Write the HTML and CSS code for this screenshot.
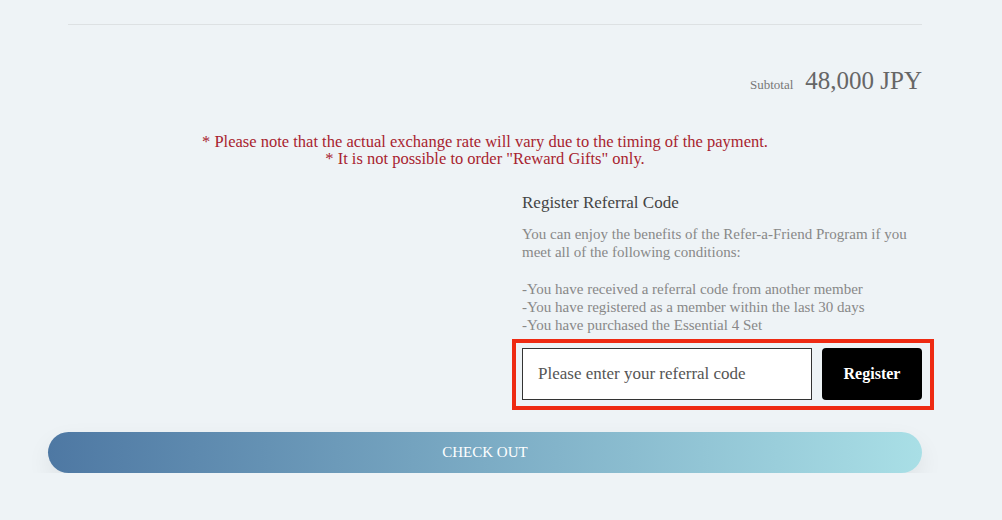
FILE: index.html
```html
<!DOCTYPE html>
<html lang="en">
<head>
    <meta charset="UTF-8">
    <meta name="viewport" content="width=device-width, initial-scale=1.0">
    <title>Cart</title>
    <link rel="stylesheet" href="styles.css">
</head>
<body>
    <div class="cart">
        <div class="divider"></div>

        <div class="subtotal">
            <span class="subtotal-label">Subtotal</span>
            <span class="subtotal-price">48,000 JPY</span>
        </div>

        <div class="notes">
            <p>* Please note that the actual exchange rate will vary due to the timing of the payment.</p>
            <p>* It is not possible to order "Reward Gifts" only.</p>
        </div>

        <div class="referral">
            <h3>Register Referral Code</h3>
            <p class="referral-text">You can enjoy the benefits of the Refer-a-Friend Program if you meet all of the following conditions:</p>
            <p class="referral-text referral-list">-You have received a referral code from another member<br>-You have registered as a member within the last 30 days<br>-You have purchased the Essential 4 Set</p>
            <div class="referral-form">
                <input type="text" placeholder="Please enter your referral code">
                <button>Register</button>
            </div>
        </div>

        <button class="checkout">CHECK OUT</button>
    </div>
</body>
</html>
```

FILE: styles.css
```css
* {
    margin: 0;
    padding: 0;
    box-sizing: border-box;
}

body {
    font-family: 'Liberation Serif', 'DejaVu Serif', serif;
    background: #eef3f6;
    color: #444;
}

.cart {
    width: 874px;
    margin-left: 48px;
    padding-top: 24px;
}

.divider {
    height: 1px;
    margin-left: 20px;
    background: #dde1e3;
}

.subtotal {
    display: flex;
    justify-content: flex-end;
    align-items: baseline;
    gap: 12px;
    margin-top: 42px;
}

.subtotal-label {
    font-size: 13px;
    color: #777;
}

.subtotal-price {
    font-size: 25px;
    color: #666;
}

.notes {
    margin-top: 38px;
    text-align: center;
    color: #a8232f;
    font-size: 16.5px;
    line-height: 17px;
}

.referral {
    width: 400px;
    margin: 25px 0 0 474px;
}

.referral h3 {
    font-size: 17px;
    font-weight: normal;
    color: #444;
    line-height: 22px;
}

.referral-text {
    font-size: 15px;
    line-height: 18px;
    color: #888;
    margin-top: 11px;
}

.referral-list {
    margin-top: 19px;
}

.referral-form {
    display: flex;
    gap: 10px;
    width: 422px;
    margin: 5px 0 0 -10px;
    padding: 5px 8px 6px 6px;
    border: 4px solid #ee2a12;
}

.referral-form input {
    flex: 1;
    height: 52px;
    padding: 0 15px;
    border: 1px solid #333;
    background: #fff;
    font-family: inherit;
    font-size: 17px;
    outline: none;
}

.referral-form input::placeholder {
    color: #555;
}

.referral-form button {
    width: 100px;
    height: 52px;
    border: none;
    border-radius: 4px;
    background: #000;
    color: #fff;
    font-family: inherit;
    font-size: 16px;
    font-weight: bold;
    cursor: pointer;
}

.checkout {
    display: block;
    width: 100%;
    height: 41px;
    margin-top: 22px;
    border: none;
    border-radius: 21px;
    background: linear-gradient(90deg, #4e78a3, #a9dfe6);
    box-shadow: 0 10px 24px rgba(0, 0, 0, 0.07);
    color: #fff;
    font-family: inherit;
    font-size: 15px;
    cursor: pointer;
}
```
